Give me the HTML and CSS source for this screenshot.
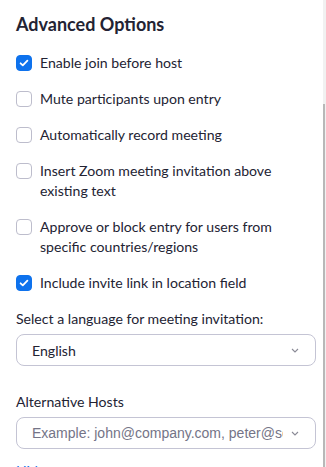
FILE: index.html
```html
<!DOCTYPE html>
<html lang="en">
<head>
<meta charset="utf-8">
<title>Advanced Options</title>
<link rel="stylesheet" href="styles.css">
</head>
<body>
<div class="panel">
  <h2 class="title">Advanced Options</h2>
  <ul class="options">
    <li class="option"><span class="box checked"><svg viewBox="0 0 16 16" width="16" height="16"><path d="M4.6 8.3l2.2 2.1 4.6-4.7" fill="none" stroke="#fff" stroke-width="1.8" stroke-linecap="round" stroke-linejoin="round"/></svg></span><span class="label">Enable join before host</span></li>
    <li class="option"><span class="box"></span><span class="label">Mute participants upon entry</span></li>
    <li class="option"><span class="box"></span><span class="label">Automatically record meeting</span></li>
    <li class="option"><span class="box"></span><span class="label">Insert Zoom meeting invitation above existing text</span></li>
    <li class="option"><span class="box"></span><span class="label">Approve or block entry for users from specific countries/regions</span></li>
    <li class="option"><span class="box checked"><svg viewBox="0 0 16 16" width="16" height="16"><path d="M4.6 8.3l2.2 2.1 4.6-4.7" fill="none" stroke="#fff" stroke-width="1.8" stroke-linecap="round" stroke-linejoin="round"/></svg></span><span class="label">Include invite link in location field</span></li>
  </ul>
  <div class="field">
    <div class="field-label">Select a language for meeting invitation:</div>
    <div class="select"><span class="value">English</span><svg class="chev" viewBox="0 0 8 5" width="8" height="5"><path d="M1 1l3 3 3-3" fill="none" stroke="#8a8a96" stroke-width="1.1"/></svg></div>
  </div>
  <div class="field hosts">
    <div class="field-label">Alternative Hosts</div>
    <div class="select"><span class="placeholder">Example: john@company.com, peter@school.edu</span><svg class="chev" viewBox="0 0 8 5" width="8" height="5"><path d="M1 1l3 3 3-3" fill="none" stroke="#8a8a96" stroke-width="1.1"/></svg></div>
  </div>
  <a class="link" href="#">Hide</a>
</div>
<div class="scrollbar"><div class="thumb"></div></div>
</body>
</html>
```
FILE: styles.css
```css
html, body {
  margin: 0;
  padding: 0;
  background: #fff;
  height: 100%;
  overflow: hidden;
}
body {
  font-family: Lato, "Open Sans", sans-serif;
  color: #232333;
  position: relative;
}
.panel {
  padding: 12px 10px 0 16px;
}
.title {
  margin: 0;
  font-size: 18px;
  font-weight: 700;
  line-height: 24px;
  color: #232333;
}
.options {
  list-style: none;
  margin: 17px 0 0 0;
  padding: 0;
  display: flex;
  flex-direction: column;
  gap: 16px;
}
.option {
  display: flex;
  align-items: flex-start;
  gap: 8px;
}
.box {
  flex: none;
  width: 16px;
  height: 16px;
  box-sizing: border-box;
  border: 1px solid #bdbdcc;
  border-radius: 4px;
  margin-top: 2px;
  background: #fff;
}
.box svg { display: block; margin: -1px; }
.box.checked {
  background: #0e72ed;
  border-color: #0e72ed;
}
.label {
  font-size: 14.1px;
  line-height: 20px;
  max-width: 270px;
}
.field {
  margin-top: 16px;
}
.field-label {
  font-size: 14.1px;
  line-height: 20px;
}
.select {
  margin-top: 5px;
  width: 300px;
  height: 32px;
  box-sizing: border-box;
  border: 1px solid #c4c4d4;
  border-radius: 8px;
  display: flex;
  align-items: center;
  padding: 0 16px 0 15px;
  gap: 8px;
}
.value {
  flex: 1;
  font-size: 14.1px;
}
.placeholder {
  flex: 1;
  font-family: "Liberation Sans", Arial, sans-serif;
  font-size: 14px;
  color: #747487;
  white-space: nowrap;
  overflow: hidden;
}
.chev { flex: none; }
.hosts { margin-top: 26px; }
.link {
  display: block;
  margin-top: 13px;
  font-size: 14px;
  color: #0e72ed;
  text-decoration: none;
}
.scrollbar {
  position: absolute;
  top: 0;
  right: 0;
  width: 3px;
  height: 100%;
  background: #f1f1f1;
}
.thumb {
  position: absolute;
  top: 104px;
  right: 1px;
  width: 2px;
  bottom: 0;
  background: #b8b8b8;
}
```
